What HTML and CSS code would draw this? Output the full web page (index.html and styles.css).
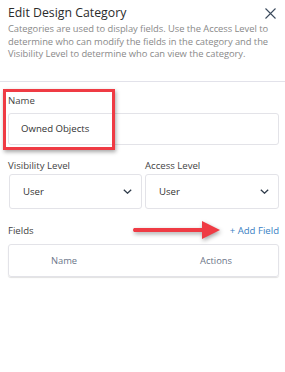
FILE: index.html
```html
<!DOCTYPE html>
<html lang="en">
<head>
    <meta charset="UTF-8">
    <title>Edit Design Category</title>
    <link rel="stylesheet" href="styles.css">
</head>
<body>
    <div class="panel">
        <div class="header">
            <h1>Edit Design Category</h1>
            <svg class="close" width="11" height="11" viewBox="0 0 11 11">
                <path d="M0.5 0.5 L10.5 10.5 M10.5 0.5 L0.5 10.5" stroke="#3b4a5c" stroke-width="1.1" fill="none"/>
            </svg>
        </div>
        <p class="desc">Categories are used to display fields. Use the Access Level to determine who can modify the fields in the category and the Visibility Level to determine who can view the category.</p>
    </div>

    <hr class="sep">

    <div class="panel form">
        <!-- Name -->
        <div class="field">
            <label>Name</label>
            <div class="input">Owned Objects</div>
        </div>

        <!-- Levels -->
        <div class="row">
            <div class="field">
                <label>Visibility Level</label>
                <div class="select">User
                    <svg width="9" height="5" viewBox="0 0 9 5"><path d="M0.8 0.8 L4.5 4.2 L8.2 0.8" stroke="#2f3b4a" stroke-width="1.3" fill="none"/></svg>
                </div>
            </div>
            <div class="field">
                <label>Access Level</label>
                <div class="select">User
                    <svg width="9" height="5" viewBox="0 0 9 5"><path d="M0.8 0.8 L4.5 4.2 L8.2 0.8" stroke="#2f3b4a" stroke-width="1.3" fill="none"/></svg>
                </div>
            </div>
        </div>

        <!-- Fields -->
        <div class="fields-head">
            <span>Fields</span>
            <a class="add">+ Add Field</a>
        </div>
        <div class="table">
            <span class="col-name">Name</span>
            <span class="col-actions">Actions</span>
        </div>
    </div>

    <!-- annotations -->
    <div class="highlight"></div>
    <svg class="arrow" width="94" height="22" viewBox="0 0 94 22">
        <path d="M4 9 L72 9 L72 2 L90 11 L72 20 L72 13 L4 13 Q2 11 4 9 Z" fill="#ef3b44"/>
    </svg>
</body>
</html>
```

FILE: styles.css
```css
body {
    font-family: "Open Sans", "Noto Sans", sans-serif;
    background: white;
    margin: 0;
    color: #333;
    position: relative;
    width: 285px;
    height: 372px;
    overflow: hidden;
}

.panel {
    padding: 0 6px 0 8px;
}

.header {
    display: flex;
    justify-content: space-between;
    align-items: flex-start;
    padding-top: 4px;
}

h1 {
    font-size: 12.3px;
    font-weight: 400;
    color: #2b2b2b;
    margin: 0;
    line-height: 18px;
}

.close {
    margin: 4px 3px 0 0;
}

.desc {
    font-size: 9.4px;
    line-height: 12.7px;
    color: #8a8a8a;
    margin: 1px 0 0;
    letter-spacing: -0.05px;
}

.sep {
    border: none;
    border-top: 1px solid #e2e2ea;
    margin: 20px 0 0;
}

.form {
    padding-right: 6px;
}

.field label {
    display: block;
    font-size: 9.6px;
    color: #444;
    line-height: 14px;
}

.form > .field {
    margin-top: 12px;
}

.form > .field label {
    margin-bottom: 5px;
}

.input {
    border: 1px solid #e3e3e8;
    border-radius: 3px;
    height: 30px;
    line-height: 30px;
    padding-left: 12px;
    font-size: 9.6px;
    color: #333;
}

.row {
    display: grid;
    grid-template-columns: 1fr 1fr;
    gap: 3px;
    margin-top: 14px;
}

.row label {
    margin-bottom: 1px;
}

.select {
    display: flex;
    justify-content: space-between;
    align-items: center;
    border: 1px solid #e3e3e8;
    border-radius: 3px;
    height: 33px;
    padding: 0 9px 0 13px;
    font-size: 9.6px;
    color: #333;
}

.row .field:first-child .select {
    margin-left: 1px;
}

.fields-head {
    display: flex;
    justify-content: space-between;
    align-items: center;
    margin-top: 15px;
    font-size: 9.6px;
    color: #444;
}

.add {
    color: #3a7fc4;
}

.table {
    display: flex;
    border: 1px solid #e3e3e8;
    border-radius: 3px;
    height: 31px;
    margin-top: 7px;
    align-items: center;
    font-size: 9.4px;
    color: #6c7689;
    box-shadow: 0 1px 1px rgba(0,0,0,0.12);
}

.col-name {
    width: 110px;
    text-align: center;
}

.col-actions {
    flex: 1;
    text-align: right;
    padding-right: 46px;
}

.highlight {
    position: absolute;
    left: 3px;
    top: 89px;
    width: 106px;
    height: 55px;
    border: 3px solid #ef3b44;
    box-shadow: 1px 2px 4px rgba(0,0,0,0.35);
}

.arrow {
    position: absolute;
    left: 130px;
    top: 219px;
    filter: drop-shadow(1px 2px 2px rgba(0,0,0,0.35));
}
```
